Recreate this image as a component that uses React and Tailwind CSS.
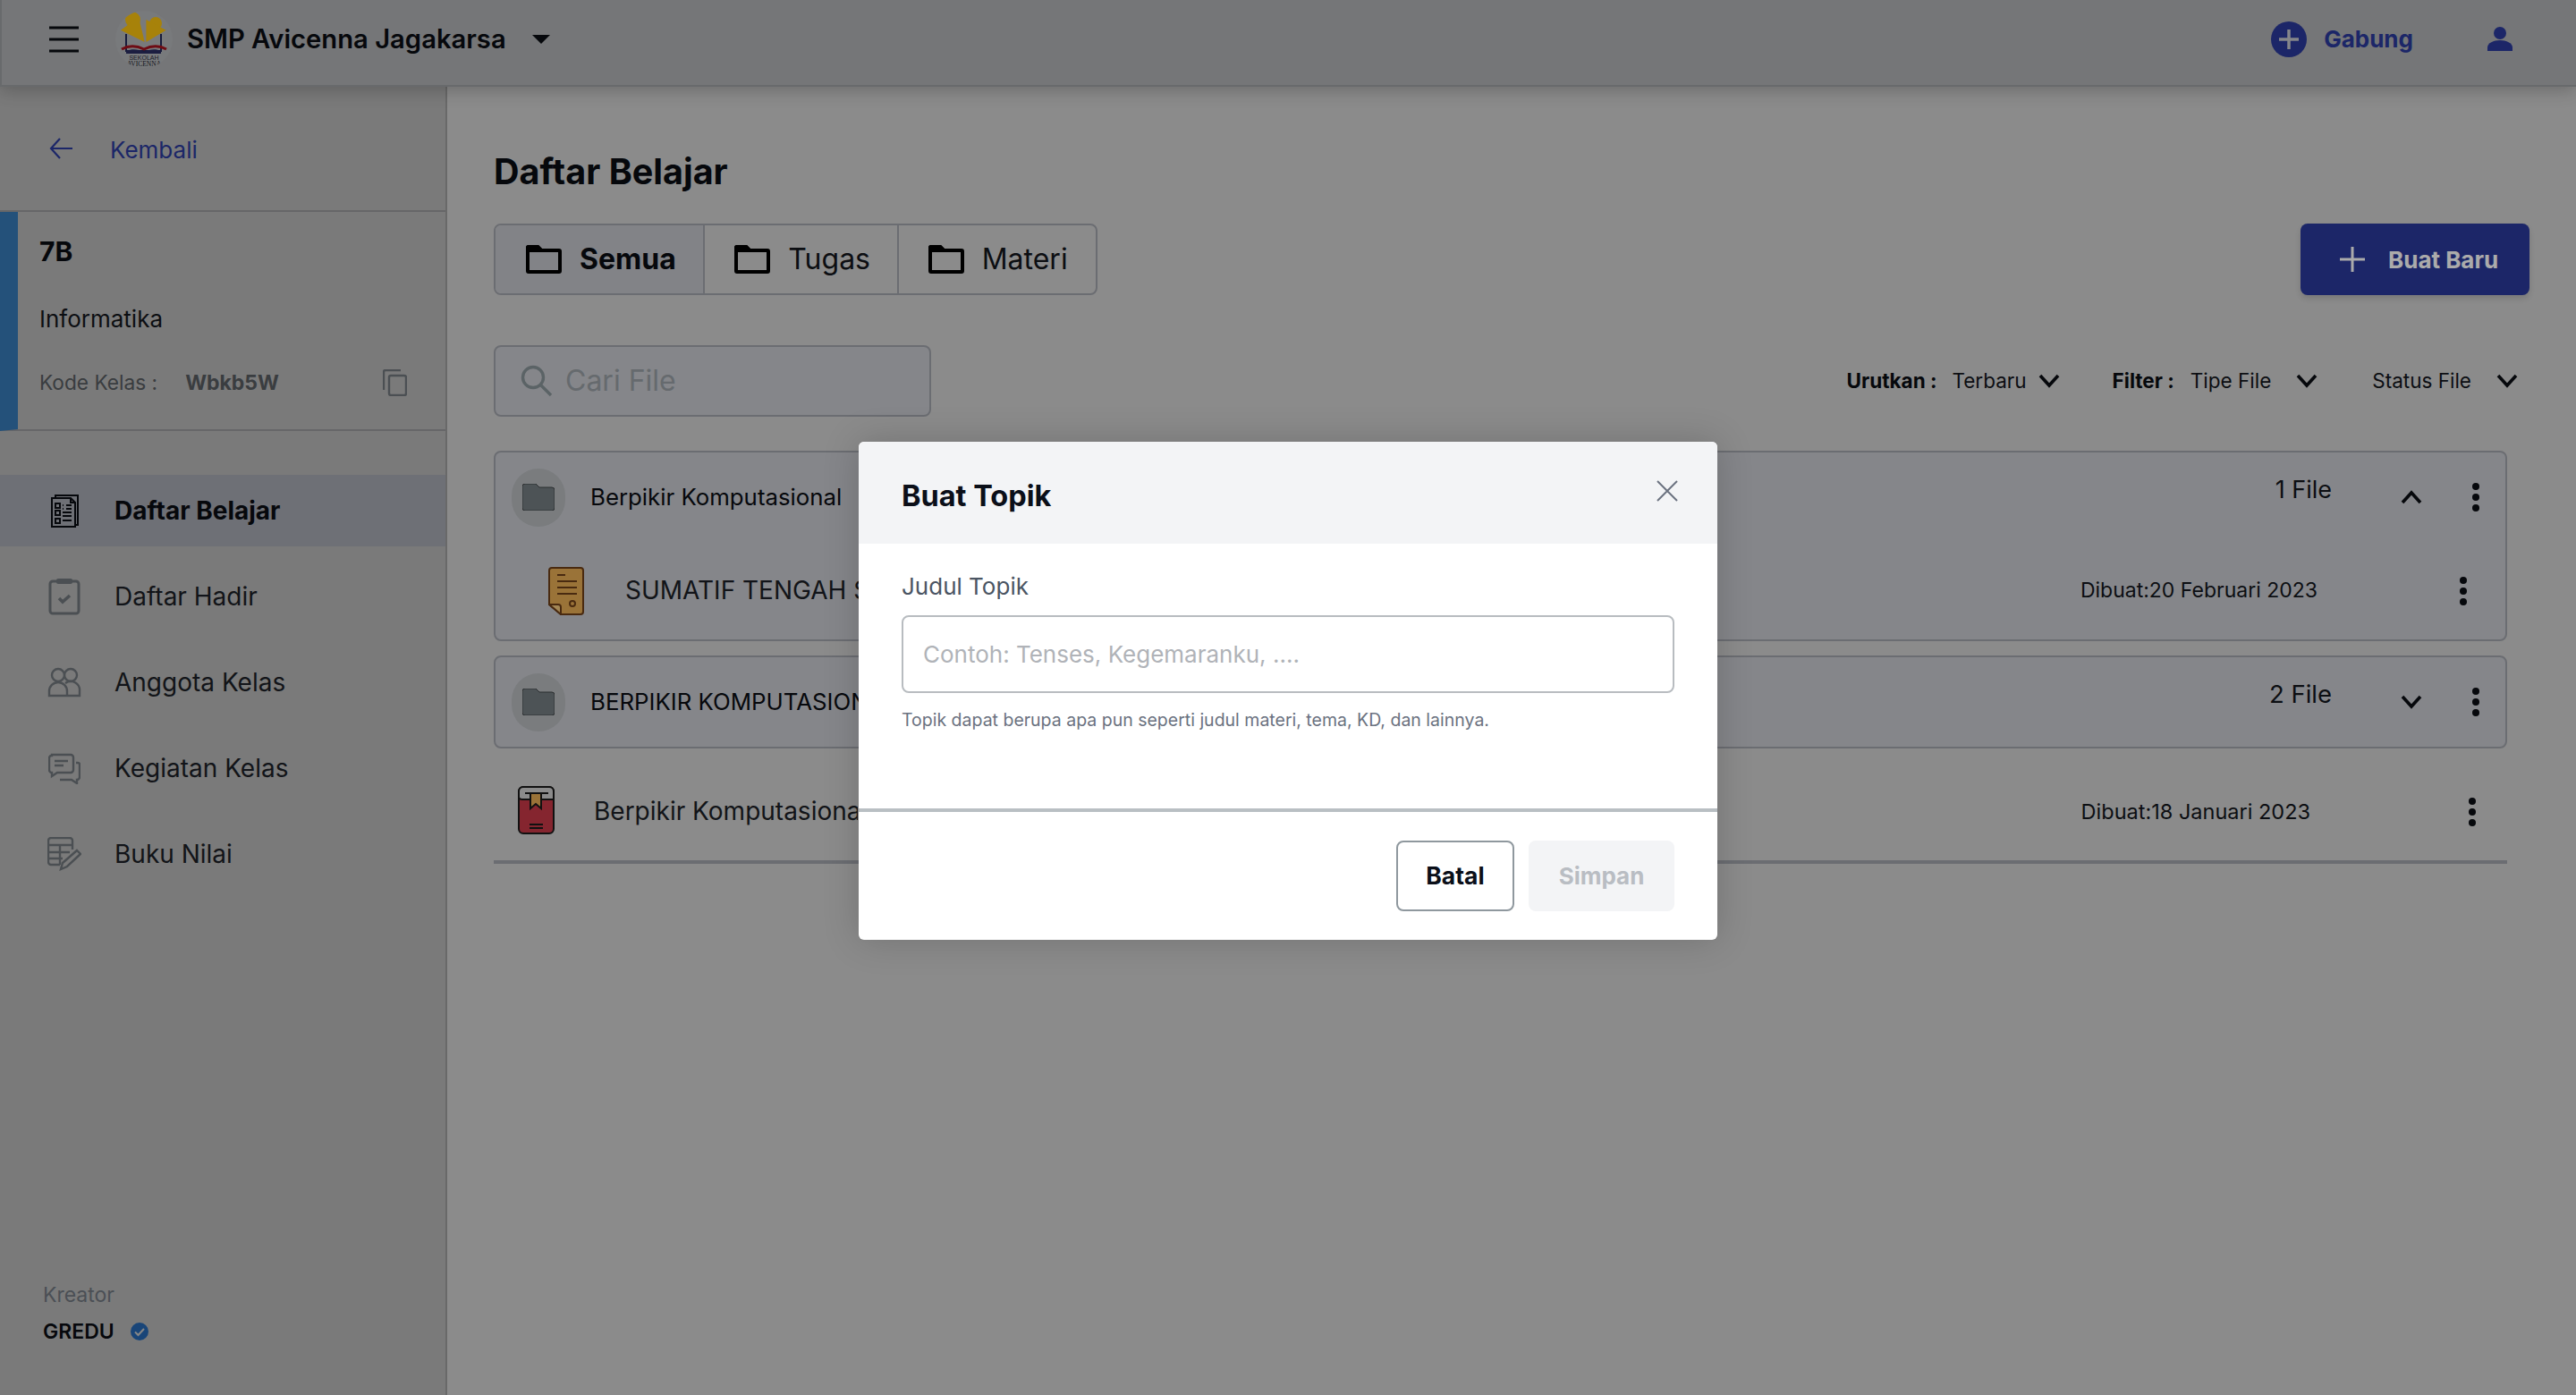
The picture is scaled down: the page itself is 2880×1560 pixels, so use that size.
import React from "react";

const Dots = ({ className = "" }) => (
  <svg width="8" height="32" viewBox="0 0 8 32" className={"shrink-0 " + className} fill="#0a0c12">
    <circle cx="4" cy="4" r="4" /><circle cx="4" cy="16" r="4" /><circle cx="4" cy="28" r="4" />
  </svg>
);
const Chevron = ({ up = false, className = "" }) => (
  <svg width="24" height="16" viewBox="0 0 24 16" fill="none" stroke="#0a0c12" strokeWidth="3.6" className={"shrink-0 " + className}>
    <path d={up ? "M2 14L12 3l10 11" : "M2 2l10 11L22 2"} />
  </svg>
);
const TabFolder = () => (
  <svg width="40" height="32" viewBox="0 0 40 32" className="shrink-0">
    <path d="M0 3a3 3 0 013-3h11l4 4h-14v24h32V8H18l-4-4 23 0a3 3 0 013 3v22a3 3 0 01-3 3H3a3 3 0 01-3-3z" fill="#000" />
    <path d="M0 3a3 3 0 013-3h11l5 5v3H0z" fill="#000" />
  </svg>
);
const CardFolder = () => (
  <svg width="36" height="30" viewBox="0 0 36 30">
    <path d="M0 3a3 3 0 013-3h12l4 4h14a3 3 0 013 3v20a3 3 0 01-3 3H3a3 3 0 01-3-3z" fill="#737c80" stroke="#3f4446" strokeWidth="1" />
  </svg>
);
const CircleFolder = () => (
  <div className="flex h-[65px] w-[60px] shrink-0 items-center justify-center rounded-full bg-[#b6b9bc]">
    <CardFolder />
  </div>
);
const Logo = () => (
  <div className="flex h-[64px] w-[64px] shrink-0 items-center justify-center overflow-hidden rounded-full bg-[#b4b6b9]">
    <svg width="64" height="64" viewBox="0 0 64 64">
      <path d="M12 26v19h39V26" fill="none" stroke="#252a5a" strokeWidth="2" />
      <circle cx="19.5" cy="10" r="8.5" fill="#fac20f" />
      <circle cx="45" cy="14" r="7" fill="#fac20f" />
      <path d="M6 21.7L26 7l6.7 28zM34.4 10l22.3 11.7L34.4 35z" fill="#fac20f" />
      <path d="M12 45c7-3 14-2 20 1 6-3 13-4 19-1v3H12z" fill="#2a2d62" />
      <path d="M7 43c9-5 17-4 25 0 8-4 16-5 25 0" fill="none" stroke="#a5121f" strokeWidth="3" />
      <text x="32" y="55" textAnchor="middle" fontSize="7" fill="#2a2d40" fontFamily="Liberation Sans">SEKOLAH</text>
      <text x="32" y="62" textAnchor="middle" fontSize="7.5" fill="#1a1d2a" fontFamily="Liberation Serif">AVICENNA</text>
    </svg>
  </div>
);

const IconList = () => (
  <svg width="40" height="40" viewBox="0 0 40 40" fill="none" stroke="#0a0c12" strokeWidth="2">
    <path d="M10 6V3h25v33h-3" />
    <path d="M6 6h21l5 5v27H6z" />
    <path d="M27 6v5h5" />
    <rect x="10" y="12" width="5" height="5" /><rect x="10" y="20" width="5" height="5" /><rect x="10" y="29" width="5" height="5" />
    <path d="M18 14h1M22 14h6M18 18h1M22 18h6M18 22h10M18 26h10M18 31h10" />
  </svg>
);
const IconClip = () => (
  <svg width="36" height="42" viewBox="0 0 36 42" fill="none" stroke="#70777c" strokeWidth="3">
    <rect x="2" y="4" width="32" height="36" rx="3" />
    <rect x="9" y="1" width="18" height="6" rx="2" fill="#70777c" stroke="none" />
    <path d="M12 23l4 4 8-7" strokeWidth="3.6" />
  </svg>
);
const IconPeople = () => (
  <svg width="38" height="34" viewBox="0 0 38 34" fill="none" stroke="#70777c" strokeWidth="2.4">
    <circle cx="12" cy="9" r="7" /><circle cx="26" cy="9" r="7" />
    <path d="M2 32V27a10 10 0 0120 0v5zM20 18a10 10 0 0116 9v5H22" />
  </svg>
);
const IconChat = () => (
  <svg width="36" height="35" viewBox="0 0 36 35" fill="none" stroke="#70777c" strokeWidth="2.4">
    <path d="M4 2h21a3 3 0 013 3v14a3 3 0 01-3 3H10l-6 4v-4a3 3 0 01-3-3V5a3 3 0 013-2z" />
    <path d="M7 9h15M7 14h10" />
    <path d="M31 11h2a2 2 0 012 2v14a3 3 0 01-3 3v4l-6-4H13" />
  </svg>
);
const IconTable = () => (
  <svg width="38" height="38" viewBox="0 0 38 38" fill="none" stroke="#70777c" strokeWidth="2.4">
    <path d="M28 14V4a3 3 0 00-3-3H4a3 3 0 00-3 3v24a3 3 0 003 3h10" />
    <path d="M1 9h27M1 17h24M1 24h16M14 9v22" />
    <path d="M33 15l4 4-15 14-7 3 2-7z" />
  </svg>
);

const NavItem = ({ icon, label, active }) => (
  <div className={"flex h-[80px] items-center pl-[52px] " + (active ? "bg-[#a4a7b0]" : "")}>
    <div className="mr-[36px] flex w-[40px] shrink-0 justify-center">{icon}</div>
    <span className={"text-[28px] " + (active ? "font-bold text-[#0a0c12]" : "text-[#1c1f26]")}>{label}</span>
  </div>
);

const Tab = ({ label, active, w, pl }) => (
  <div className={"flex h-full items-center " + pl + " " + w + " " + (active ? "bg-[#c2c4ca]" : "border-l-2 border-[#a0a3aa]")}>
    <TabFolder />
    <span className={"ml-[20px] text-[32px] " + (active ? "font-bold text-[#0a0c12]" : "text-[#13161c]")}>{label}</span>
  </div>
);

export default function App() {
  return (
    <div className="relative h-[1560px] w-[2880px] overflow-hidden bg-[#cfcfcf] text-[#0a0c12] [font-family:Inter,sans-serif]">
      <header className="relative z-10 flex h-[97px] items-center border-b-2 border-l-2 border-[#9c9ea2] bg-[#afb0b3] pb-[8px] pl-[53px] shadow-[0_4px_18px_rgba(0,0,0,0.22)]">
        <svg width="33" height="30" viewBox="0 0 33 30" stroke="#0a0c12" strokeWidth="3"><path d="M0 2h33M0 15h33M0 28h33" /></svg>
        <div className="ml-[41px]"><Logo /></div>
        <span className="ml-[16px] text-[29.2px] font-semibold">SMP Avicenna Jagakarsa</span>
        <svg width="20" height="10" viewBox="0 0 20 10" className="ml-[29px]"><path d="M0 0h20L10 10z" fill="#0a0c12" /></svg>
        <div className="ml-auto flex items-center pr-[71px]">
          <svg width="40" height="40" viewBox="0 0 40 40"><circle cx="20" cy="20" r="20" fill="#2a3a9b" /><path d="M20 9v22M9 20h22" stroke="#c6c8ce" strokeWidth="3.5" /></svg>
          <span className="ml-[19px] text-[26px] font-bold text-[#2a3a9b]">Gabung</span>
          <svg width="28" height="27" viewBox="0 0 28 27" className="ml-[83px]" fill="#2a3a9b"><circle cx="14" cy="7" r="7" /><path d="M0 27v-4c0-5 7-8 14-8s14 3 14 8v4z" /></svg>
        </div>
      </header>

      <div className="flex h-[1463px]">
        <aside className="flex w-[500px] shrink-0 flex-col border-r-2 border-[#9d9d9d] bg-[#b6b6b6]">
          <div className="flex h-[140px] items-center border-b-2 border-[#98999c] pl-[55px]">
            <svg width="26" height="24" viewBox="0 0 26 24" fill="none" stroke="#2a3a9b" strokeWidth="2.2"><path d="M26 12H2M12 1L2 12l10 11" /></svg>
            <span className="ml-[42px] mt-[2px] text-[26px] text-[#2a3a9b]">Kembali</span>
          </div>
          <div className="flex h-[245px] flex-col border-b-2 border-l-[20px] border-b-[#98999c] border-l-[#377ab6] pl-[24px] pr-[43px]">
            <span className="mt-[24px] text-[30px] font-bold leading-[40px]">7B</span>
            <span className="mt-[38px] text-[26px] leading-[36px] text-[#13161c]">Informatika</span>
            <div className="mt-[37px] flex items-center text-[22.7px] leading-[32px]">
              <span className="text-[#575b60]">Kode Kelas :</span>
              <span className="ml-[31px] text-[23px] font-bold text-[#575b60]">Wbkb5W</span>
              <svg width="27" height="30" viewBox="0 0 27 30" fill="none" stroke="#70777c" strokeWidth="2.4" className="ml-auto">
                <path d="M20 1H3a2 2 0 00-2 2v20" /><rect x="7" y="7" width="19" height="22" rx="2" />
              </svg>
            </div>
          </div>
          <nav className="mt-[49px] flex flex-col gap-[16px]">
            <NavItem active icon={<IconList />} label="Daftar Belajar" />
            <NavItem icon={<IconClip />} label="Daftar Hadir" />
            <NavItem icon={<IconPeople />} label="Anggota Kelas" />
            <NavItem icon={<IconChat />} label="Kegiatan Kelas" />
            <NavItem icon={<IconTable />} label="Buku Nilai" />
          </nav>
          <div className="mt-auto pb-[55px] pl-[48px]">
            <div className="text-[23px] leading-[32px] text-[#70767f]">Kreator</div>
            <div className="mt-[9px] flex items-center">
              <span className="text-[23px] font-semibold leading-[32px]">GREDU</span>
              <svg width="20" height="20" viewBox="0 0 20 20" className="ml-[18px]"><circle cx="10" cy="10" r="10" fill="#2668b4" /><path d="M5 10.5l3.5 3.5L15 7" fill="none" stroke="#c8c8c8" strokeWidth="2" /></svg>
            </div>
          </div>
        </aside>

        <main className="flex min-w-0 flex-1 flex-col pl-[52px] pr-[52px] pt-[71px]">
          <h1 className="text-[39.5px] font-bold leading-[48px]">Daftar Belajar</h1>
          <div className="mt-[34px] flex items-center justify-between">
            <div className="flex h-[80px] w-[675px] overflow-hidden rounded-[8px] border-2 border-[#a0a3aa]">
              <Tab active label="Semua" w="w-[233px]" pl="pl-[34px]" />
              <Tab label="Tugas" w="w-[217px]" pl="pl-[33px]" />
              <Tab label="Materi" w="w-[223px]" pl="pl-[33px]" />
            </div>
            <button className="flex h-[80px] w-[256px] items-center rounded-[8px] bg-[#2a3a9b] pl-[44px] shadow-[0_4px_6px_rgba(0,0,0,0.12)]">
              <svg width="28" height="28" viewBox="0 0 28 28" stroke="#ffffff" strokeWidth="3"><path d="M14 0v28M0 14h28" /></svg>
              <span className="ml-[26px] text-[26px] font-bold text-white">Buat Baru</span>
            </button>
          </div>

          <div className="mt-[56px] flex items-center">
            <div className="flex h-[80px] w-[489px] items-center rounded-[8px] border-2 border-[#a0a3aa] bg-[#c6c8ce] pl-[28px]">
              <svg width="36" height="36" viewBox="0 0 36 36" fill="none" stroke="#889498" strokeWidth="3.4" className="shrink-0">
                <circle cx="14" cy="14" r="11.5" /><path d="M22 22l12 12" />
              </svg>
              <input placeholder="Cari File" readOnly className="ml-[14px] w-[300px] bg-transparent text-[32px] outline-none placeholder:text-[#989fa4]" />
            </div>
            <div className="ml-auto mr-[13px] flex items-center text-[22.5px] text-[#13161c]">
              <span className="font-bold text-[#0a0c12]">Urutkan :</span>
              <span className="ml-[17px]">Terbaru</span>
              <Chevron className="ml-[13px]" />
              <span className="ml-[59px] font-bold text-[#0a0c12]">Filter :</span>
              <span className="ml-[18px]">Tipe File</span>
              <Chevron className="ml-[28px]" />
              <span className="ml-[61px]">Status File</span>
              <Chevron className="ml-[28px]" />
            </div>
          </div>

          <div className="mr-[25px] mt-[38px] flex flex-col">
            <div className="flex flex-col rounded-[8px] border-2 border-[#a0a3aa] bg-[#c6c8ce]">
              <div className="flex h-[100px] items-center pl-[18px] pr-[29px]">
                <CircleFolder />
                <span className="ml-[28px] text-[25.8px] text-[#0a0c12]">Berpikir Komputasional</span>
                <span className="ml-auto -translate-y-2 text-[27px] text-[#13161c]">1 File</span>
                <Chevron up className="ml-[77px]" />
                <Dots className="ml-[56px]" />
              </div>
              <div className="flex h-[109px] items-center pl-[59px] pr-[43px]">
                <svg width="40" height="54" viewBox="0 0 40 54" className="shrink-0" stroke="#6e3f18" strokeWidth="2">
                  <path d="M4 1h32a3 3 0 013 3v46a3 3 0 01-3 3H14L1 42V4a3 3 0 013-3z" fill="#e6ac54" />
                  <path d="M1 42h10a3 3 0 013 3v8z" fill="#f4c980" />
                  <path d="M10 9h9M10 16h22M10 23h22M10 30h22" strokeWidth="2.2" fill="none" />
                  <circle cx="27" cy="41" r="3" fill="none" />
                </svg>
                <span className="ml-[46px] w-[261px] -translate-y-[1px] overflow-hidden whitespace-nowrap text-[28px] text-[#1c1f26]">SUMATIF TENGAH SEMESTER</span>
                <span className="ml-auto text-[23px] text-[#13161c]">Dibuat:20 Februari 2023</span>
                <Dots className="ml-[159px]" />
              </div>
            </div>

            <div className="mt-[16px] flex h-[104px] items-center rounded-[8px] border-2 border-[#a0a3aa] bg-[#c6c8ce] pl-[18px] pr-[29px]">
              <CircleFolder />
              <span className="ml-[28px] w-[300px] overflow-hidden whitespace-nowrap text-[25.8px] text-[#0a0c12]">BERPIKIR KOMPUTASIONAL</span>
              <span className="ml-auto -translate-y-2 text-[27.5px] text-[#13161c]">2 File</span>
              <Chevron className="ml-[77px]" />
              <Dots className="ml-[56px]" />
            </div>

            <div className="mt-[16px] flex h-[113px] items-center border-b-4 border-[#a0a3aa] pl-[27px] pr-[35px]">
              <svg width="41" height="54" viewBox="0 0 41 54" className="shrink-0 -translate-y-[2px]" stroke="#1a1a1a" strokeWidth="2">
                <rect x="1" y="1" width="39" height="52" rx="5" fill="#c63846" />
                <path d="M1 13V6a5 5 0 015-5h29a5 5 0 015 5v9H6a5 5 0 01-5-2z" fill="#cfcfcf" />
                <path d="M8 8h26" fill="none" />
                <path d="M14 8h12v17l-6-5-6 5z" fill="#e6ac54" />
                <path d="M13 43h15M13 47h15" fill="none" />
              </svg>
              <span className="ml-[44px] w-[295px] -translate-y-[1px] overflow-hidden whitespace-nowrap text-[28px] text-[#1c1f26]">Berpikir Komputasional</span>
              <span className="ml-auto text-[23.5px] text-[#13161c]">Dibuat:18 Januari 2023</span>
              <Dots className="ml-[177px]" />
            </div>
          </div>
        </main>
      </div>

      <div className="absolute inset-0 z-20 flex items-start justify-center bg-black/[0.33] pt-[494px]">
        <div className="flex h-[557px] w-[960px] flex-col overflow-hidden rounded-[6px] bg-white shadow-[0_0_40px_rgba(0,0,0,0.18)]">
          <div className="flex h-[114px] items-start justify-between bg-[#f3f4f6] pl-[48px] pr-[44px]">
            <span className="mt-[37px] text-[32.5px] font-bold leading-[48px] text-[#0b0f19]">Buat Topik</span>
            <svg width="24" height="24" viewBox="0 0 24 24" className="mt-[43px]" fill="none" stroke="#6b7280" strokeWidth="2"><path d="M1 1l22 22M23 1L1 23" /></svg>
          </div>
          <div className="flex h-[296px] flex-col px-[48px]">
            <label className="mt-[30px] text-[26px] leading-[36px] text-[#4b5563]">Judul Topik</label>
            <input readOnly placeholder="Contoh: Tenses, Kegemaranku, ...." className="mt-[14px] h-[87px] w-full rounded-[8px] border-2 border-[#b8bcc0] px-[22px] text-[26px] outline-none placeholder:text-[#b0b3b8]" />
            <p className="mt-[16px] text-[19.5px] leading-[28px] text-[#6b7280]">Topik dapat berupa apa pun seperti judul materi, tema, KD, dan lainnya.</p>
          </div>
          <div className="flex justify-end gap-[16px] border-t-4 border-[#b9bfc3] pr-[48px] pt-[32px]">
            <button className="h-[79px] w-[132px] rounded-[8px] border-2 border-[#8f989e] bg-white text-[26.5px] font-bold text-[#0b0f19]">Batal</button>
            <button className="h-[79px] w-[163px] rounded-[8px] bg-[#f3f4f6] text-[26px] font-bold text-[#b9bdc3]">Simpan</button>
          </div>
        </div>
      </div>
    </div>
  );
}
